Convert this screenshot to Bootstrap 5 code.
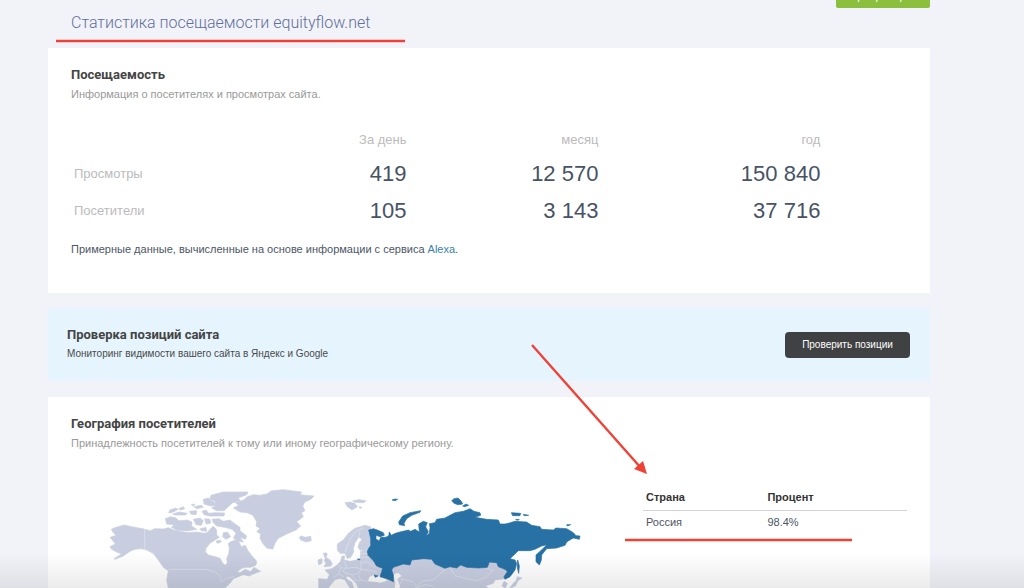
<!DOCTYPE html>
<html lang="ru">
<head>
<meta charset="utf-8">
<meta name="viewport" content="width=device-width, initial-scale=1">
<title>Статистика посещаемости equityflow.net</title>
<link href="https://cdn.jsdelivr.net/npm/bootstrap@5.3.0/dist/css/bootstrap.min.css" rel="stylesheet">
<style>
  body { background: #f2f3f8; font-family: "Liberation Sans", Arial, sans-serif; font-size: 11px; line-height: 16px; color: #4b5666; }
  .page { min-height: 100vh; max-height: 100vh; padding: 0 94px 0 48px; }
  /* The toolbar is partly scrolled out of view */
  .toolbar { margin-top: -22px; height: 70px; padding-left: 23px; }
  .site-title { font-family: Roboto, "Liberation Sans", sans-serif; font-size: 16px; line-height: 24px; font-weight: 300; color: #5f6f9c; padding-bottom: 13px; }
  .btn-recheck { background: #8bbf3d; color: #fff; font-size: 11px; line-height: 16px; height: 30px; width: 94px; padding: 10px 0 4px; border-radius: 2px; }
  .btn-dark-flat { background: #404142; color: #fff; font-size: 10px; line-height: 16px; width: 125px; height: 26px; border-radius: 4px; }
  .panel { background: #fff; padding: 18px 23px 36px; margin-bottom: 15px; }
  .panel-title { font-family: Roboto, "Liberation Sans", sans-serif; font-size: 13px; line-height: 18px; font-weight: 700; color: #444; }
  .panel-note { color: #999; line-height: 20px; }
  .promo { background: #e6f4fe; padding: 18px 20px 17px 19px; margin-bottom: 16px; color: #4a4a4a; }
  .promo-note { font-size: 10px; line-height: 20px; }
  .stats { width: 90%; table-layout: fixed; margin-top: 21px; }
  .stats th { font-size: 13px; font-weight: 400; color: #bbb; padding: 0 3px; }
  .stats td { font-size: 22px; color: #475365; padding: 0 3px; }
  .stats th, .stats td { height: 37px; }
  .stats thead th, .stats thead td { height: 30px; }
  .source-note { margin-top: 12px; line-height: 16px; }
  .source-note a { color: #3a7fb0; }
  .geo { margin-top: 27px; }
  .map-box { padding: 0 43px 0 29px; }
  .countries-box { width: 264px; padding-top: 5px; }
  .countries th { font-weight: 700; color: #333; padding: 0 3px; height: 25px; border-bottom: 1px solid #d2d3d6; }
  .countries td { padding: 0 3px; height: 24px; }
  .bottom-shade { height: 36px; background: linear-gradient(rgba(0,0,0,0), rgba(0,0,0,.08)); pointer-events: none; }
  .marks { pointer-events: none; }
</style>
</head>
<body>
<main class="page position-relative overflow-hidden">
  <header class="toolbar d-flex justify-content-between align-items-start">
    <h1 class="site-title mb-0 align-self-end">Статистика посещаемости equityflow.net</h1>
    <button type="button" class="btn btn-recheck border-0">Перепроверить</button>
  </header>

  <section class="panel">
    <h2 class="panel-title mb-0">Посещаемость</h2>
    <p class="panel-note mb-0">Информация о посетителях и просмотрах сайта.</p>
    <table class="stats">
      <colgroup><col style="width:20%"><col style="width:25%"><col style="width:25.5%"><col style="width:29.5%"></colgroup>
      <thead><tr class="text-end"><td></td><th scope="col">За день</th><th scope="col">месяц</th><th scope="col">год</th></tr></thead>
      <tbody>
        <tr class="text-end"><th scope="row" class="text-start">Просмотры</th><td>419</td><td>12 570</td><td>150 840</td></tr>
        <tr class="text-end"><th scope="row" class="text-start">Посетители</th><td>105</td><td>3 143</td><td>37 716</td></tr>
      </tbody>
    </table>
    <p class="source-note mb-0">Примерные данные, вычисленные на основе информации с сервиса <a href="#" class="text-decoration-none">Alexa</a>.</p>
  </section>

  <section class="promo d-flex justify-content-between align-items-center">
    <div>
      <h2 class="panel-title mb-0">Проверка позиций сайта</h2>
      <p class="promo-note mb-0">Мониторинг видимости вашего сайта в Яндекс и Google</p>
    </div>
    <button type="button" class="btn btn-dark-flat border-0 p-0">Проверить позиции</button>
  </section>

  <section class="panel">
    <h2 class="panel-title mb-0">География посетителей</h2>
    <p class="panel-note mb-0">Принадлежность посетителей к тому или иному географическому региону.</p>
    <div class="geo d-flex">
      <div class="map-box flex-grow-1">
        <svg class="d-block w-100" viewBox="0 0 1500 420" role="img" aria-label="Карта мира">
          <g fill="#c8cee0" stroke="#c8cee0" stroke-width="2" stroke-linejoin="round">
            <!-- North America -->
            <path d="M30 172 48 166 40 158 34 148 48 142 72 135 95 140 132 147 150 152 165 146 190 147 205 143 222 150 240 154 262 158 290 156 312 160 322 158 330 148 340 138 350 150 350 165 358 172 345 180 330 190 318 205 316 215 325 225 345 230 360 235 368 250 376 256 382 248 380 235 386 222 388 205 385 190 395 184 408 180 418 188 424 200 436 196 444 212 456 228 470 244 468 255 452 262 436 262 425 265 412 275 420 278 436 268 452 275 462 262 482 274 470 278 455 284 448 288 430 284 415 290 400 296 390 310 375 324 360 420 240 420 205 324 200 300 205 272 190 262 175 240 160 220 140 210 125 206 105 208 90 214 70 228 45 238 42 236 65 222 50 216 35 208 30 200 46 192 40 184Z"/>
            <!-- Arctic archipelago -->
            <path d="M333 46 370 36 444 36 440 44 415 54 420 62 398 68 385 80 372 92 350 92 335 84 348 76 345 64 330 56Z"/>
            <path d="M310 58 325 54 342 66 350 76 332 78 312 72Z M210 90 226 84 234 88 220 96 206 99Z M236 86 250 80 254 86 242 90Z M218 102 238 96 262 100 256 105 226 105Z M274 74 284 72 280 79Z M282 80 305 76 310 82 290 86Z M268 94 290 92 288 104 272 102Z M306 94 318 90 326 100 345 98 374 99 372 108 330 108 312 104Z"/>
            <path d="M196 116 212 110 228 114 236 122 262 120 276 126 275 138 290 148 262 153 230 150 214 142 222 134 200 132Z M280 118 300 114 310 122 304 136 288 134Z M314 116 330 118 332 130 318 132Z M336 118 356 116 370 124 390 120 402 130 420 142 420 152 440 168 436 178 420 172 430 186 412 184 400 174 408 160 396 148 374 142 350 138 340 128Z M370 158 382 156 392 170 378 178 368 170Z M300 146 318 142 320 154 304 152Z"/>
            <path d="M348 184 360 180 364 186 352 190Z"/>
          </g>
          <g transform="translate(420)" fill="#c8cee0" stroke="#c8cee0" stroke-width="2" stroke-linejoin="round">
            <!-- Greenland, Svalbard, Iceland, Europe -->
            <path d="M-20 84 -4 76 -14 68 10 60 22 50 40 44 60 46 80 42 95 32 130 29 185 36 180 44 222 48 215 56 195 66 188 78 195 92 184 98 190 110 170 125 182 138 168 150 140 162 115 175 105 190 98 208 80 204 68 190 60 175 62 162 50 155 60 145 48 138 50 125 38 105 20 98 0 96Z"/>
            <path d="M315 68 330 66 345 70 352 80 336 90 322 80Z M338 62 358 59 378 62 372 68 345 67Z M358 80 366 82 360 86Z M178 172 184 168 196 172 212 169 214 182 198 186 182 180Z"/>
            <path d="M250 220 258 218 262 222 258 232 270 240 277 252 272 258 252 260 258 250 252 242 256 236Z M234 240 246 236 246 250 236 254Z"/>
            <path d="M292 192 310 180 325 160 345 145 375 136 392 140 392 185 388 204 376 212 360 210 354 202 358 188 366 178 356 172 345 188 340 205 342 215 332 232 322 236 315 220 300 220 292 210Z"/>
            <path d="M236 324 236 296 262 298 268 284 255 270 275 266 290 256 302 244 306 228 314 228 312 240 330 244 350 240 360 236 362 222 362 214 386 212 400 250 430 262 435 270 425 287 410 288 400 284 390 290 384 304 400 306 438 302 462 306 480 324 500 420 236 420Z"/>
          </g>
          <g transform="translate(720)" fill="#c8cee0" stroke="#c8cee0" stroke-width="2" stroke-linejoin="round">
            <!-- Central and East Asia -->
            <path d="M140 296 160 250 250 230 400 240 470 240 500 270 500 286 495 296 465 300 460 310 435 318 445 324 480 420 180 420 150 324Z"/>
            <path d="M532 290 546 294 534 302 526 318 508 326 520 310 528 302Z M492 304 502 310 496 324 486 318Z"/>
          </g>
          <g fill="#fafafa">
            <!-- Seas -->
            <path d="M684 326 705 300 720 296 734 300 745 318 752 330 748 420 660 420Z M738 290 748 290 768 310 776 330 764 330 756 306 742 298Z"/>
            <path d="M804 304 808 292 820 286 832 292 845 290 860 303 840 308 820 304Z M880 284 894 278 904 288 892 298 900 318 896 332 884 326 886 306Z"/>
          </g>
          <g fill="none" stroke="#e3e6f0" stroke-width="2" stroke-linejoin="round">
            <!-- Country borders -->
            <path d="M134 148V208L150 216 166 228 M207 268H318L345 276 362 290 364 304 382 294 402 290"/>
            <path d="M736 216 742 196 752 174 770 154 790 144 M776 172 780 156 M710 250 722 262 718 280 M732 244 740 262 728 272 740 284 M724 264 746 264 764 262 782 266 784 242 M784 266 776 280 756 284 740 280 M784 250 800 244 826 262 M784 232 808 232 M782 222 806 220 M784 268 806 270 830 276 M776 284 782 300 804 304 M700 292 716 282 732 290 M758 286 764 300 780 302"/>
            <path d="M900 296 940 306 950 318 970 302 1000 300 1022 280 1040 266 M910 298 900 312 M945 324 975 314 1000 318 M1050 264 1066 288 1090 294 1130 302 1160 290 1178 272 1160 264"/>
          </g>
          <g transform="translate(720)" fill="#2771a5" stroke="#2771a5" stroke-width="2" stroke-linejoin="round">
            <!-- Russia -->
            <path d="M86 150 100 146 112 150 130 158 133 166 120 170 108 166 108 178 118 182 122 172 136 172 146 168 148 156 154 166 166 160 180 156 205 150 212 154 225 148 238 156 236 132 250 124 262 128 257 140 265 155 258 168 268 160 270 142 268 131 285 128 290 118 315 114 330 106 345 98 370 94 390 86 402 94 420 98 422 106 405 112 440 118 475 120 480 132 495 132 505 130 525 124 560 126 575 136 600 140 605 148 640 150 648 144 680 146 700 158 708 167 720 168 718 178 700 174 686 182 680 186 675 196 650 204 620 206 605 225 604 240 598 255 588 245 588 225 610 205 620 194 605 198 585 208 570 212 535 212 510 236 525 240 530 250 525 270 510 290 495 298 492 290 502 275 495 268 475 260 470 248 448 246 442 262 415 264 380 262 362 255 350 264 330 260 315 265 285 252 275 238 250 236 215 240 210 255 190 252 160 262 155 270 160 285 160 305 145 298 120 290 125 275 128 265 110 258 98 240 84 226 82 212 92 196 92 175Z"/>
            <path d="M178 134 176 126 188 108 210 98 242 92 240 97 215 106 200 116 192 130 194 137Z M156 60 165 57 173 58 165 62Z M335 62 342 56 354 54 364 64 368 72 354 74 342 70Z M368 78 378 72 386 76 374 80Z M514 98 542 100 540 107 518 107Z M550 103 566 106 552 107Z M527 118 538 119 530 121Z M680 134 692 134 682 138Z M533 240 538 258 536 280 532 262Z M52 237 60 238 58 240Z M102 285 114 288 106 292Z"/>
          </g>
        </svg>
      </div>
      <div class="countries-box flex-shrink-0">
        <table class="countries w-100">
          <colgroup><col style="width:46%"><col style="width:54%"></colgroup>
          <thead><tr><th scope="col">Страна</th><th scope="col">Процент</th></tr></thead>
          <tbody><tr><td>Россия</td><td>98.4%</td></tr></tbody>
        </table>
      </div>
    </div>
  </section>

  <div class="bottom-shade position-absolute bottom-0 start-0 end-0"></div>
  <!-- Hand-drawn markers over the page -->
  <svg class="marks position-absolute top-0 start-0" width="1024" height="588" viewBox="0 0 1024 588" aria-hidden="true" stroke="#ef4136" fill="none">
    <path d="M56 41H405" stroke-width="2.6"/>
    <path d="M625 540H852" stroke-width="2.6"/>
    <path d="M532 345 641 468" stroke-width="2.4"/>
    <path d="M647 474 634 469 643 461Z" fill="#ef4136" stroke="none"/>
  </svg>
</main>
<script src="https://cdn.jsdelivr.net/npm/bootstrap@5.3.0/dist/js/bootstrap.bundle.min.js"></script>
</body>
</html>
